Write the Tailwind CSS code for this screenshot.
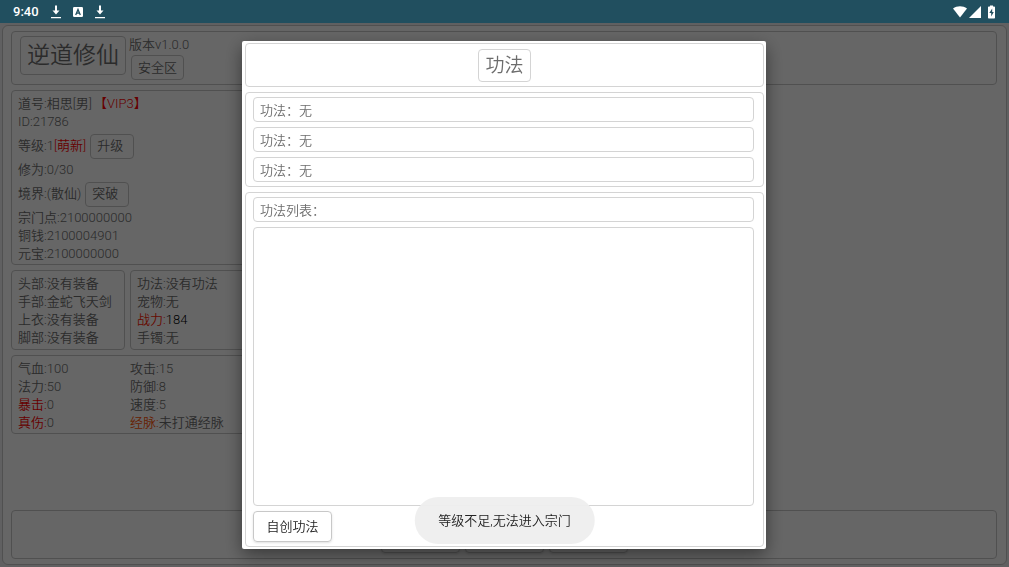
<!DOCTYPE html>
<html lang="zh-CN">
<head>
  <meta charset="UTF-8" />
  <meta name="viewport" content="width=device-width, initial-scale=1.0"/>
  <title>逆道修仙</title>
  <script src="https://cdn.jsdelivr.net/npm/@tailwindcss/browser@4"></script>
</head>
<body class="h-screen flex flex-col overflow-hidden bg-[#f0f0f2] font-[Roboto,'Noto_Sans_CJK_SC',sans-serif] font-[350] text-[13px] leading-[18px] text-[#6c6c6c]">

  <!-- status bar -->
  <header class="relative z-30 h-[23px] shrink-0 bg-[#214f5f] text-white flex items-center justify-between px-[13px]">
    <div class="flex items-center gap-3">
      <span class="font-medium">9:40</span>
      <svg class="w-[10px] h-[14px]" viewBox="0 0 10 14" fill="currentColor"><path d="M4 .5h2v5h2.500L5 9.500 1.500 5.500H4zM0 12h10v1.300H0z"/></svg>
      <svg class="w-[10px] h-[12px]" viewBox="0 0 10 12"><rect y="1" width="10" height="10" rx="1.2" fill="currentColor"/><path d="M2.700 9 5 3.400 7.300 9M3.500 7.200h3" fill="none" stroke="#214f5f" stroke-width="1.300"/></svg>
      <svg class="w-[10px] h-[14px]" viewBox="0 0 10 14" fill="currentColor"><path d="M4 .5h2v5h2.500L5 9.500 1.500 5.500H4zM0 12h10v1.300H0z"/></svg>
    </div>
    <div class="flex items-center">
      <svg class="w-[14px] h-[12px]" viewBox="0 0 14 12" fill="currentColor"><path d="M0 2.500C4-.4 10-.4 14 2.500L7 11.500z"/></svg>
      <svg class="ml-0.5 w-[12px] h-[12px]" viewBox="0 0 12 12" fill="currentColor"><path d="M12 0v12H0z"/></svg>
      <svg class="ml-[7px] mr-px w-[7px] h-[14px]" viewBox="0 0 7 14"><path d="M2 .5h3v1h1.200q.8 0 .8.800v10.400q0 .8-.8.800H.8q-.8 0-.8-.8V2.300q0-.8.8-.8H2z" fill="currentColor"/><path d="M4.200 3.500 1.300 8h1.900v3.500L5.800 7H4.200z" fill="#214f5f"/></svg>
    </div>
  </header>

  <!-- game screen -->
  <main class="flex-1 min-h-0 mx-[2px] mt-[2px] mb-[2px] border border-[#c8c8c8] rounded-md bg-white pl-2 pr-[9px] pt-[5px] pb-[5px] flex flex-col gap-[5px]">
    <section class="border border-[#c8c8c8] rounded px-2 py-1 flex gap-[3px]">
      <h1 class="border border-[#c8c8c8] rounded h-[39px] px-[6px] text-[23px] leading-[38px]">逆道修仙</h1>
      <div>
        <p>版本v1.0.0</p>
        <button class="ml-[2px] mt-px h-[25px] px-[6px] border border-[#c8c8c8] rounded">安全区</button>
      </div>
    </section>

    <section class="w-1/2 border border-[#c8c8c8] rounded px-[6px] pt-1 pb-px">
      <p>道号:相思[男]<span class="pl-[2px] text-[#ff0000]">【VIP3】</span></p>
      <p>ID:21786</p>
      <div class="h-[30px] flex items-center gap-1">
        <p>等级:1<span class="text-[#ff0000]">[萌新]</span></p>
        <button class="h-[25px] w-[44px] pl-[6px] text-left border border-[#c8c8c8] rounded">升级</button>
      </div>
      <p>修为:0/30</p>
      <div class="h-[30px] flex items-center gap-1">
        <p>境界:(散仙)</p>
        <button class="h-[25px] w-[44px] pl-[6px] text-left border border-[#c8c8c8] rounded">突破</button>
      </div>
      <p>宗门点:2100000000</p>
      <p>铜钱:2100004901</p>
      <p>元宝:2100000000</p>
    </section>

    <div class="w-1/2 flex gap-[5px]">
      <section class="w-[114px] border border-[#c8c8c8] rounded px-[6px] pt-1 pb-[2px]">
        <p>头部:没有装备</p>
        <p class="whitespace-nowrap">手部:金蛇飞天剑</p>
        <p>上衣:没有装备</p>
        <p>脚部:没有装备</p>
      </section>
      <section class="flex-1 border border-[#c8c8c8] rounded px-[6px] pt-1 pb-[2px]">
        <p>功法:没有功法</p>
        <p>宠物:无</p>
        <p class="text-black"><span class="text-[#ff2000]">战力:</span>184</p>
        <p>手镯:无</p>
      </section>
    </div>

    <section class="w-1/2 border border-[#c8c8c8] rounded px-[6px] pt-1 pb-px flex">
      <div class="w-[112px]">
        <p>气血:100</p>
        <p>法力:50</p>
        <p><span class="text-[#ff0000]">暴击:</span>0</p>
        <p><span class="text-[#ff0000]">真伤:</span>0</p>
      </div>
      <div>
        <p>攻击:15</p>
        <p>防御:8</p>
        <p>速度:5</p>
        <p><span class="text-[#ff5000]">经脉:</span>未打通经脉</p>
      </div>
    </section>

    <nav class="mt-auto h-[49px] shrink-0 border border-[#c8c8c8] rounded flex justify-center items-end gap-[5px] pb-[5px]">
      <button aria-label="修炼" class="w-[79px] h-[31px] border border-[#c8c8c8] rounded shadow-sm"></button>
      <button aria-label="宗门" class="w-[79px] h-[31px] border border-[#c8c8c8] rounded shadow-sm"></button>
      <button aria-label="背包" class="w-[79px] h-[31px] border border-[#c8c8c8] rounded shadow-sm"></button>
    </nav>
  </main>

  <!-- dialog -->
  <div class="fixed inset-0 top-[23px] z-10 bg-black/60 flex justify-center items-start pt-[18px] pb-[18px] pr-px">
    <div role="dialog" aria-label="功法" class="w-[524px] h-full bg-white rounded-xs shadow-[0_6px_18px_rgba(0,0,0,0.45)] pl-[3px] pr-[2px] py-[2px] flex flex-col gap-[5px]">
      <div class="border border-[#d4d4d4] rounded h-[44px] shrink-0 flex justify-center items-center">
        <h2 class="border border-[#d4d4d4] rounded px-[6px] h-[33px] text-[19px] leading-[32px]">功法</h2>
      </div>
      <ul class="border border-[#d4d4d4] rounded pl-[7px] pr-[9px] py-1 flex flex-col gap-[5px]">
        <li class="h-[25px] border border-[#d4d4d4] rounded px-[6px] pt-1">功法：无</li>
        <li class="h-[25px] border border-[#d4d4d4] rounded px-[6px] pt-1">功法：无</li>
        <li class="h-[25px] border border-[#d4d4d4] rounded px-[6px] pt-1">功法：无</li>
      </ul>
      <div class="flex-1 min-h-0 border border-[#d4d4d4] rounded pl-[7px] pr-[9px] py-1 flex flex-col gap-[5px]">
        <h3 class="h-[25px] shrink-0 border border-[#d4d4d4] rounded px-[6px] pt-1">功法列表：</h3>
        <div class="flex-1 border border-[#d4d4d4] rounded"></div>
        <button class="self-start w-[79px] h-[31px] shrink-0 border border-[#c8c8c8] rounded shadow-sm text-[#222]">自创功法</button>
      </div>
    </div>
  </div>

  <!-- toast -->
  <div role="status" class="fixed bottom-[23px] left-1/2 -translate-x-1/2 z-20 h-[47px] px-6 pt-px flex items-center rounded-full bg-[#eeeeee]/95 text-[#222] whitespace-nowrap">等级不足,无法进入宗门</div>
</body>
</html>
